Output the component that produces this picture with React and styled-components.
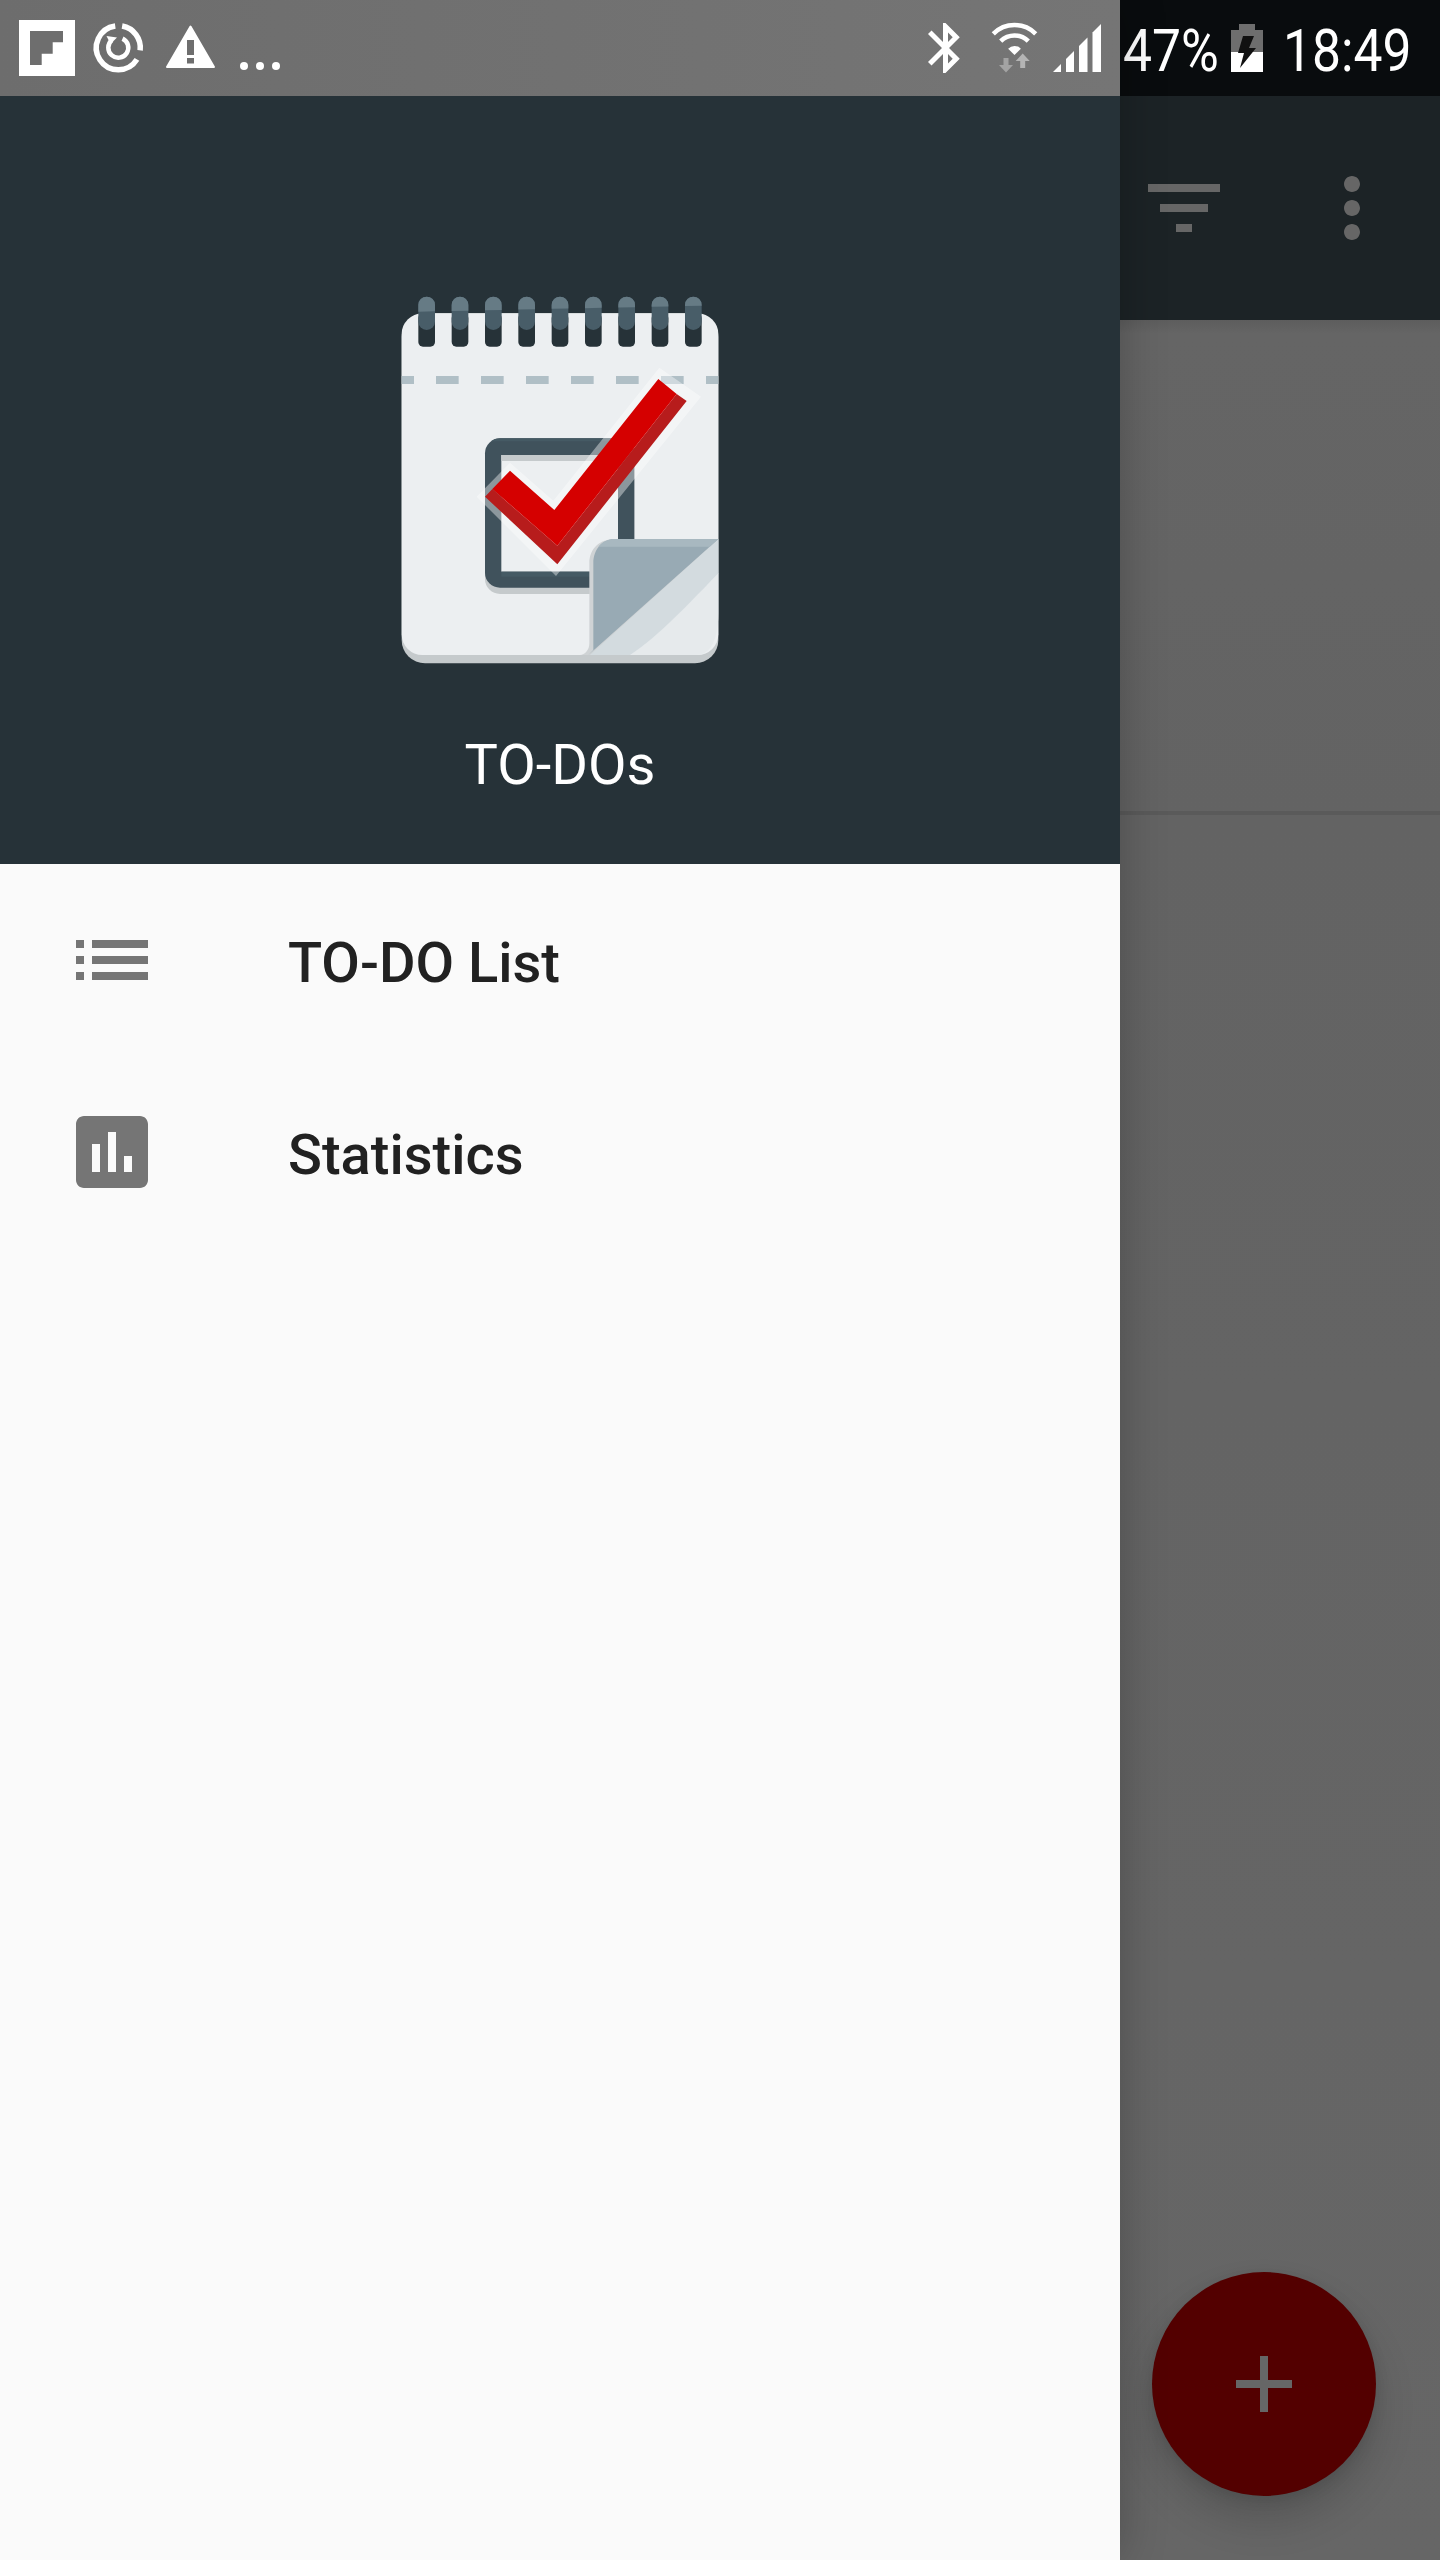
import React from "react";
import styled, { createGlobalStyle } from "styled-components";

const Global = createGlobalStyle`
  html, body { margin: 0; padding: 0; background: #646464; }
  * { box-sizing: border-box; }
`;

const Screen = styled.div`
  width: 1440px;
  height: 2560px;
  display: flex;
  overflow: hidden;
  font-family: Roboto, "Noto Sans", sans-serif;
`;

const Drawer = styled.aside`
  position: relative;
  z-index: 2;
  width: 1120px;
  height: 100%;
  display: flex;
  flex-direction: column;
  background: #fafafa;
  box-shadow: 0 0 44px rgba(0, 0, 0, 0.24);
`;

const StatusLeft = styled.div`
  height: 96px;
  flex: none;
  display: flex;
  align-items: center;
  justify-content: space-between;
  padding: 0 16px 0 11px;
  background: linear-gradient(90deg, #6d6d6d, #757575);
`;

const IconGroup = styled.div`
  display: flex;
  align-items: center;
`;

const StatusIcon = styled.svg`
  display: block;
  height: 56px;
  flex: none;
`;

const Header = styled.header`
  height: 768px;
  flex: none;
  display: flex;
  flex-direction: column;
  align-items: center;
  padding-top: 200px;
  background: #263238;
`;

const Logo = styled.svg`
  display: block;
  width: 320px;
  height: 368px;
  flex: none;
`;

const Title = styled.div`
  margin-top: 68px;
  font-size: 56px;
  line-height: 66px;
  font-weight: 400;
  color: #ffffff;
`;

const Nav = styled.nav`
  display: flex;
  flex-direction: column;
`;

const NavRow = styled.div`
  height: 192px;
  display: flex;
  align-items: center;
  gap: 128px;
  padding-left: 64px;
`;

const NavIcon = styled.svg`
  display: block;
  width: 96px;
  height: 96px;
  fill: #757575;
  flex: none;
`;

const NavLabel = styled.span`
  font-size: 56px;
  line-height: 66px;
  padding-top: 6px;
  font-weight: 500;
  color: #212121;
`;

const Side = styled.div`
  width: 320px;
  height: 100%;
  display: flex;
  flex-direction: column;
`;

const StatusRight = styled.div`
  height: 96px;
  flex: none;
  display: flex;
  align-items: center;
  padding-left: 3px;
  background: #090c0e;
`;

const StatusText = styled.span`
  display: block;
  flex: none;
  width: ${(p) => p.$w}px;
  padding-top: 6px;
  font-size: 60px;
  line-height: 70px;
  font-weight: 400;
  white-space: nowrap;
  color: #ffffff;
  transform: scaleX(0.86);
  transform-origin: left center;
`;

const Battery = styled.svg`
  display: block;
  width: 32px;
  height: 48px;
  flex: none;
`;

const Clock = styled(StatusText)`
  margin-left: 20px;
`;

const Toolbar = styled.div`
  height: 224px;
  flex: none;
  display: flex;
  align-items: center;
  gap: 72px;
  padding-left: 16px;
  background: #1c2326;
`;

const ToolIcon = styled.svg`
  display: block;
  width: 96px;
  height: 96px;
  fill: #666666;
  flex: none;
`;

const Content = styled.main`
  flex: 1;
  display: flex;
  flex-direction: column;
  background: linear-gradient(180deg, #5d5d5d 0, #656565 14px, #636363 500px, #666666 100%);
`;

const ListArea = styled.div`
  height: 495px;
  flex: none;
  border-bottom: 4px solid #5a5a5a;
`;

const FabZone = styled.div`
  flex: 1;
  display: flex;
  align-items: flex-end;
  justify-content: flex-end;
  padding: 0 64px 64px 0;
`;

const Fab = styled.div`
  width: 224px;
  height: 224px;
  border-radius: 50%;
  display: flex;
  align-items: center;
  justify-content: center;
  background: #530000;
  box-shadow: 0 24px 40px rgba(0, 0, 0, 0.16), 0 4px 14px rgba(0, 0, 0, 0.1);
`;

const FabPlus = styled.svg`
  display: block;
  width: 96px;
  height: 96px;
  fill: #666666;
`;

const Slot = ({ x, w = 72, children }) => (
  <StatusIcon style={{ width: w }} viewBox={`${x} 20 ${w} 56`}>{children}</StatusIcon>
);

const arcR = (cx, cy, r, a) => {
  const t = (a * Math.PI) / 180;
  return `${(cx + r * Math.sin(t)).toFixed(2)} ${(cy - r * Math.cos(t)).toFixed(2)}`;
};

const FlipboardIcon = () => (
  <Slot x={11}>
    <rect x="19" y="20" width="56" height="56" fill="#fff" />
    <path d="M30 31H63V42.3H52.7V53.7H41.7V65H30Z" fill="#6e6e6e" />
  </Slot>
);

const RestoreIcon = () => (
  <Slot x={83}>
    <g fill="none" stroke="#fff" strokeWidth="5.5">
      <path d={`M${arcR(118.3, 47.7, 22, 10)}A22 22 0 0 1 ${arcR(118.3, 47.7, 22, 97)}`} />
      <path d={`M${arcR(118.3, 47.7, 22, 122)}A22 22 0 1 1 ${arcR(118.3, 47.7, 22, -8)}`} />
      <path strokeWidth="4.5" d={`M${arcR(118.3, 47.7, 10, 25)}A10 10 0 1 1 ${arcR(118.3, 47.7, 10, -40)}`} />
    </g>
    <path d="M106.5 36L117 37.5L110.5 44Z" fill="#fff" />
  </Slot>
);

const WarningIcon = () => (
  <Slot x={155}>
    <path d="M190.5 26.5L214 67H167Z" fill="#fff" stroke="#fff" strokeWidth="2" strokeLinejoin="round" />
    <path d="M187 40H194V55H187ZM187 58H194V63.5H187Z" fill="#6e6e6e" />
  </Slot>
);

const MoreDots = () => (
  <Slot x={227}>
    <g fill="#fff">
      <circle cx="244" cy="66" r="4" />
      <circle cx="260" cy="66" r="4" />
      <circle cx="276" cy="66" r="4" />
    </g>
  </Slot>
);

const BluetoothIcon = () => (
  <Slot x={908}>
    <path
      transform="translate(915.5 18) scale(2.5)"
      fill="#fff"
      d="M17.71 7.71L12 2h-1v7.59L6.41 5 5 6.41 10.59 12 5 17.59 6.41 19 11 14.41V22h1l5.71-5.71-4.3-4.29 4.3-4.29zM13 5.83l1.88 1.88L13 9.59V5.83zm1.88 10.46L13 18.17v-3.76l1.88 1.88z"
    />
  </Slot>
);

const WifiIcon = () => {
  const cx = 1014.5;
  const cy = 55;
  return (
    <Slot x={980}>
      <g fill="none" stroke="#fff" strokeWidth="4.5">
        <path d={`M${arcR(cx, cy, 30, -45)}A30 30 0 0 1 ${arcR(cx, cy, 30, 45)}`} />
        <path d={`M${arcR(cx, cy, 19.5, -45)}A19.5 19.5 0 0 1 ${arcR(cx, cy, 19.5, 45)}`} />
      </g>
      <path d={`M${cx} ${cy}L${arcR(cx, cy, 9, -45)}A9 9 0 0 1 ${arcR(cx, cy, 9, 45)}Z`} fill="#fff" />
      <path d="M1003.5 58H1008.5V65H1013L1006 72.5L999 65H1003.5Z" fill="#a3a3a3" />
      <path d="M1020.2 68H1025.2V61H1029.7L1022.7 53.5L1015.7 61H1020.2Z" fill="#b4b4b4" />
    </Slot>
  );
};

const SignalIcon = () => {
  const bars = [[1053, 1061], [1066, 1074], [1079, 1087.5], [1092.5, 1101]];
  return (
    <Slot x={1052} w={52}>
      {bars.map(([a, b]) => (
        <path key={a} fill="#fff" d={`M${a} 72H${b}V${72 - (b - 1053)}L${a} ${72 - (a - 1053)}Z`} />
      ))}
    </Slot>
  );
};

const ringXs = [0, 1, 2, 3, 4, 5, 6, 7, 8];
const dashes = [[65, 37], [168, 68], [303, 68], [438, 68], [573, 68], [708, 68], [843, 68], [978, 37]];

const NotebookLogo = () => (
  <Logo viewBox="60 48 960 1104">
    <rect x="65" y="100" width="950" height="1050" rx="70" fill="#c5cacc" />
    <rect x="65" y="100" width="950" height="1025" rx="62" fill="#eceff1" />
    {ringXs.map((i) => (
      <rect key={i} x={115 + 100 * i} y="100" width="50" height="100" rx="14" fill="#263238" />
    ))}
    {ringXs.map((i) => {
      const x = 115 + 100 * i;
      const by = 95 - 2.1 * i;
      return (
        <g key={i}>
          <rect x={x} y="50" width="50" height="100" rx="25" fill="#485d68" />
          <path d={`M${x} ${by}V75a25 25 0 0 1 50 0V${by - 1}Z`} fill="#667b85" />
        </g>
      );
    })}
    {dashes.map(([x, w]) => (
      <rect key={x} x={x} y="288" width={w} height="24" fill="#b0bfc6" />
    ))}

    <rect x="315" y="494" width="448" height="448" rx="45" fill="#c5cacc" />
    <rect x="315" y="475" width="448" height="448" rx="45" fill="#40525c" />
    <path d="M360 475H718A45 45 0 0 1 745 484H333A45 45 0 0 1 360 475Z" fill="#455a64" />
    <rect x="364" y="525" width="350" height="350" fill="#eceff1" />
    <rect x="364" y="525" width="350" height="18" fill="#c5cacc" />
    <rect x="364" y="875" width="350" height="15" fill="#455a64" />

    <path d="M838 263L963 350L528 888L290 650L390 548L520 662Z" fill="#fff" opacity="0.4" />
    <path d="M890 342L920 363L532 853L315 650L337 627L532 797Z" fill="#b71c1c" />
    <path d="M835 297L890 342L532 797L337 627L390 572L523 690Z" fill="#d50000" />

    <path d="M1015 880C900 1000 820 1080 750 1125H950C985 1125 1015 1090 1015 1000Z" fill="#e6eaec" />
    <path d="M1015 777L615 1125H750C820 1080 900 1000 1015 880Z" fill="#d3dbdf" />
    <path d="M1015 777H705C660 777 628 805 628 850V1090C628 1110 615 1125 600 1125H630Z" fill="#cfd3d5" />
    <path d="M1015 777H705C670 777 640 805 640 850V1110L625 1125Z" fill="#98aab4" />
    <path d="M1015 777H705C685 777 668 785 655 800H989Z" fill="#a8b8c0" />
  </Logo>
);

export default function App() {
  return (
    <>
      <Global />
      <Screen>
        <Drawer>
          <StatusLeft>
            <IconGroup>
              <FlipboardIcon />
              <RestoreIcon />
              <WarningIcon />
              <MoreDots />
            </IconGroup>
            <IconGroup>
              <BluetoothIcon />
              <WifiIcon />
              <SignalIcon />
            </IconGroup>
          </StatusLeft>
          <Header>
            <NotebookLogo />
            <Title>TO-DOs</Title>
          </Header>
          <Nav>
            <NavRow>
              <NavIcon viewBox="0 0 24 24">
                <path d="M3 13h2v-2H3v2zm0 4h2v-2H3v2zm0-8h2V7H3v2zm4 4h14v-2H7v2zm0 4h14v-2H7v2zM7 7v2h14V7H7z" />
              </NavIcon>
              <NavLabel>TO-DO List</NavLabel>
            </NavRow>
            <NavRow>
              <NavIcon viewBox="0 0 24 24">
                <path d="M19 3H5c-1.1 0-2 .9-2 2v14c0 1.1.9 2 2 2h14c1.1 0 2-.9 2-2V5c0-1.1-.9-2-2-2zM9 17H7v-7h2v7zm4 0h-2V7h2v10zm4 0h-2v-4h2v4z" />
              </NavIcon>
              <NavLabel>Statistics</NavLabel>
            </NavRow>
          </Nav>
        </Drawer>
        <Side>
          <StatusRight>
            <StatusText $w={108}>47%</StatusText>
            <Battery viewBox="1231 24 32 48">
              <path d="M1239 24H1255V30H1263V52H1231V30H1239Z" fill="#6e6e6e" />
              <rect x="1231" y="52" width="32" height="20" fill="#fff" />
              <path d="M1243 36H1254L1249 48H1256L1240 68L1244 53H1238Z" fill="#111" />
            </Battery>
            <Clock $w={130}>18:49</Clock>
          </StatusRight>
          <Toolbar>
            <ToolIcon viewBox="0 0 24 24">
              <path d="M10 18h4v-2h-4v2zM3 6v2h18V6H3zm3 7h12v-2H6v2z" />
            </ToolIcon>
            <ToolIcon viewBox="0 0 24 24">
              <path d="M12 8c1.1 0 2-.9 2-2s-.9-2-2-2-2 .9-2 2 .9 2 2 2zm0 2c-1.1 0-2 .9-2 2s.9 2 2 2 2-.9 2-2-.9-2-2-2zm0 6c-1.1 0-2 .9-2 2s.9 2 2 2 2-.9 2-2-.9-2-2-2z" />
            </ToolIcon>
          </Toolbar>
          <Content>
            <ListArea />
            <FabZone>
              <Fab>
                <FabPlus viewBox="0 0 24 24">
                  <path d="M19 13h-6v6h-2v-6H5v-2h6V5h2v6h6v2z" />
                </FabPlus>
              </Fab>
            </FabZone>
          </Content>
        </Side>
      </Screen>
    </>
  );
}
